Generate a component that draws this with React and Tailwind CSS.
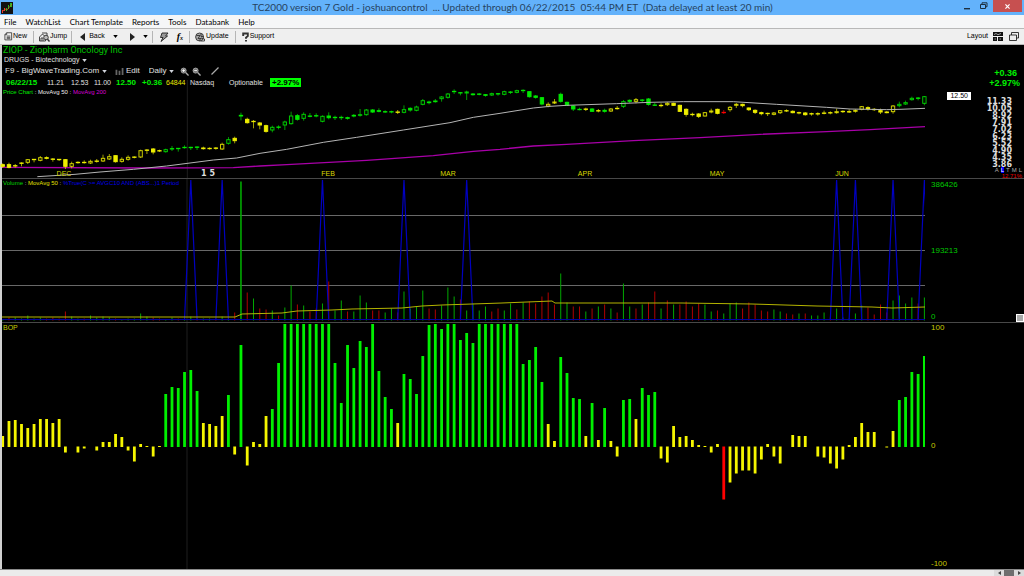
import { Fragment } from 'react';

const W = 923;
const xAt = (i) => 0.7 + i * 6.27;

// [high, top, bottom, low, kind] in thirds of a pixel
// kind: y/g/r = colour, uppercase = hollow body
const candles = [
    [250, 253, 260, 264, 'y'], [248, 253, 263, 265, 'y'], [252, 256, 259, 263, 'y'], [247, 248, 251, 259, 'y'],
    [237, 238, 248, 252, 'Y'], [237, 237, 239, 247, 'y'], [228, 232, 242, 244, 'Y'], [229, 232, 236, 238, 'y'],
    [234, 236, 239, 245, 'y'], [237, 237, 239, 243, 'y'], [237, 238, 260, 267, 'y'], [245, 250, 260, 265, 'Y'],
    [244, 246, 249, 251, 'y'], [241, 246, 249, 251, 'y'], [239, 243, 250, 252, 'Y'], [237, 242, 245, 248, 'y'],
    [224, 234, 244, 246, 'Y'], [222, 229, 238, 240, 'Y'], [226, 226, 246, 248, 'y'], [232, 237, 245, 248, 'Y'],
    [226, 231, 239, 242, 'Y'], [229, 230, 233, 235, 'y'], [209, 211, 232, 234, 'Y'], [207, 209, 212, 222, 'y'],
    [204, 206, 217, 223, 'y'], [209, 211, 214, 216, 'y'], [206, 208, 216, 218, 'G'], [198, 205, 208, 213, 'g'],
    [204, 204, 207, 215, 'g'], [196, 201, 204, 206, 'g'], [200, 201, 204, 210, 'g'], [199, 200, 203, 210, 'g'],
    [200, 203, 207, 209, 'y'], [202, 204, 207, 209, 'y'], [201, 203, 206, 209, 'y'], [188, 192, 208, 210, 'Y'],
    [171, 178, 191, 194, 'G'], [170, 174, 183, 190, 'y'], [98, 105, 109, 121, 'g'], [113, 117, 129, 131, 'y'],
    [120, 123, 126, 145, 'y'], [126, 128, 136, 148, 'y'], [134, 136, 155, 158, 'y'], [137, 141, 151, 157, 'G'],
    [136, 140, 143, 148, 'g'], [122, 125, 136, 150, 'G'], [95, 107, 132, 134, 'G'], [102, 106, 119, 122, 'g'],
    [97, 102, 116, 122, 'G'], [99, 107, 110, 112, 'g'], [100, 106, 109, 112, 'g'], [106, 108, 125, 127, 'G'],
    [97, 107, 114, 118, 'g'], [107, 111, 114, 120, 'g'], [107, 111, 114, 120, 'g'], [110, 112, 116, 119, 'g'],
    [102, 105, 109, 112, 'g'], [87, 103, 107, 110, 'G'], [87, 89, 105, 107, 'G'], [87, 89, 97, 99, 'g'],
    [85, 91, 95, 97, 'g'], [91, 94, 97, 99, 'g'], [92, 94, 97, 100, 'g'], [90, 95, 98, 102, 'y'],
    [76, 88, 98, 100, 'G'], [82, 84, 91, 95, 'g'], [77, 80, 92, 94, 'G'], [57, 61, 74, 76, 'G'],
    [62, 65, 69, 73, 'g'], [57, 62, 66, 68, 'g'], [48, 50, 57, 65, 'G'], [39, 41, 53, 56, 'G'],
    [28, 33, 36, 42, 'g'], [36, 37, 40, 46, 'g'], [32, 35, 40, 60, 'G'], [39, 41, 45, 47, 'g'],
    [39, 41, 44, 46, 'g'], [42, 43, 47, 50, 'g'], [38, 40, 46, 48, 'G'], [39, 40, 43, 47, 'g'],
    [32, 34, 44, 46, 'G'], [33, 35, 38, 42, 'g'], [29, 31, 38, 40, 'G'], [28, 30, 33, 39, 'g'],
    [34, 34, 51, 53, 'g'], [45, 47, 53, 56, 'g'], [51, 52, 73, 76, 'g'], [67, 72, 79, 82, 'Y'],
    [57, 65, 70, 72, 'Y'], [38, 42, 65, 68, 'g'], [65, 66, 77, 78, 'g'], [75, 77, 88, 93, 'g'],
    [83, 87, 90, 91, 'g'], [83, 86, 89, 93, 'y'], [84, 86, 95, 96, 'g'], [87, 91, 94, 97, 'y'],
    [86, 90, 95, 98, 'g'], [84, 86, 94, 96, 'Y'], [78, 84, 87, 89, 'y'], [60, 64, 80, 84, 'G'],
    [58, 60, 65, 69, 'g'], [54, 58, 65, 70, 'Y'], [57, 59, 62, 66, 'g'], [54, 56, 74, 77, 'g'],
    [69, 74, 77, 78, 'g'], [70, 75, 78, 82, 'y'], [66, 69, 75, 78, 'Y'], [68, 69, 77, 78, 'y'],
    [74, 75, 95, 96, 'y'], [85, 87, 104, 110, 'y'], [98, 102, 105, 109, 'y'], [99, 101, 110, 114, 'y'],
    [96, 97, 109, 110, 'Y'], [86, 92, 97, 100, 'Y'], [86, 87, 101, 103, 'y'], [90, 96, 99, 102, 'r'],
    [78, 81, 90, 95, 'Y'], [69, 72, 77, 84, 'Y'], [71, 72, 78, 82, 'y'], [82, 83, 90, 93, 'y'],
    [88, 90, 98, 102, 'y'], [95, 97, 102, 106, 'y'], [98, 99, 102, 108, 'y'], [96, 98, 104, 106, 'Y'],
    [90, 91, 99, 102, 'Y'], [88, 91, 94, 96, 'y'], [91, 93, 99, 100, 'y'], [95, 97, 100, 103, 'y'],
    [96, 98, 105, 107, 'y'], [98, 100, 103, 107, 'y'], [97, 100, 103, 107, 'y'], [92, 98, 101, 103, 'y'],
    [94, 97, 100, 103, 'y'], [86, 94, 99, 101, 'Y'], [91, 93, 96, 99, 'y'], [88, 94, 97, 99, 'y'],
    [88, 90, 95, 98, 'Y'], [78, 79, 89, 91, 'Y'], [79, 82, 87, 92, 'y'], [84, 87, 90, 93, 'y'],
    [86, 91, 97, 102, 'y'], [93, 95, 99, 100, 'y'], [75, 77, 96, 101, 'Y'], [65, 72, 78, 82, 'G'],
    [62, 67, 73, 75, 'G'], [50, 54, 60, 62, 'G'], [51, 53, 56, 61, 'g'], [48, 49, 71, 76, 'G'],
];

const ma50 = '106,290 219,283 294,276 394,268 494,258 564,249 634,240 704,234 774,220 854,208 964,187 1064,172 1204,150 1344,128 1414,112 1494,100 1594,84 1644,79 1694,76 1844,71 1944,67 2044,65 2194,65 2274,70 2324,73 2474,82 2544,87 2654,89 2694,88 2769,85';
const ma200 = '0,262 444,264 694,263 774,258 854,254 1094,241 1294,227 1414,214 1494,208 1594,198 1694,193 1894,182 2094,173 2274,163 2474,155 2604,149 2769,140';

// negative = down day
const volume = [
    1, -3, 3, 2, 5, 2, 3, -2, -3, -2, -9, 4, 2, -2, 5, 3, 4, 3, -2, 1, 2, 2, 7, 4, -3, -2, 1, 3, -2, 2,
    4, -2, 2, 2, -2, 4, 2, -8, 139, -28, 22, -12, -11, 10, -5, 13, 35, -16, 15, -9, -12, 17, -39, 10, 20, -9, 9, 25, 18, -10,
    -10, 8, 12, -8, 29, 12, 14, 30, -12, -11, 15, 33, 24, -21, 10, 17, 10, 14, -9, -12, 10, 17, -11, 18, -19, -17, -24, -28, -16, 47,
    18, -14, -14, 9, -12, 14, -16, 12, -8, 37, 14, -12, 16, -18, -29, 12, -20, 16, -16, -19, -14, -17, 16, 9, -10, 7, 17, 18, -12, -18,
    -16, -10, -9, 11, 9, -7, -6, 7, -7, 5, 5, 8, -3, 12, 3, 2, 7, 15, -13, -6, -16, -8, 20, 25, 17, 23, -17, 23,
];
const volumeAvg = '0,138 233,138 240,135 280,134 295,132 330,131 350,130 400,129 420,127 440,126 470,125 500,124 550,122 553,124 620,124 680,124 750,125 815,127 870,128 890,129 923,128';
const signals = [30, 35, 51, 64, 74, 133, 136, 142, 147];

const bop = [
    11, 26, 27, 23, 19, 23, 28, 28, 24, 28, -6, 0, -6, -2, 0, -4, 5, 5, 13, 10, -4, -15, 3, 1, -10, 1, 53, 60, 59, 75,
    77, 56, 24, 23, 21, 31, 52, -8, 102, -19, 5, 3, 31, 38, 84, 123, 123, 123, 123, 123, 123, 123, 123, 84, 44, 102, 79, 106, 100, 123,
    76, 50, 38, 24, 73, 68, 53, 91, 122, 123, 118, 123, 123, 107, 114, 104, 123, 123, 123, 123, 123, 123, 123, 83, 87, 100, 65, 23, 6, 90,
    74, 49, 48, 11, 44, 7, 39, 6, -10, 47, 48, 28, 59, 52, 55, -12, -16, 21, 10, 11, 7, 2, 1, -6, 3, -53, -36, -27, -24, -24,
    -27, -13, 3, -10, -17, 0, 12, 11, 11, 0, -10, -11, -17, -22, -13, 2, 10, 24, 15, 15, 0, -1, 16, 47, 50, 75, 73, 91,
];

const bopColor = (v) => (v > 35 ? '#00f000' : v < -50 ? '#ff0000' : '#f5f500');
const candleColors = { y: '#eeee00', g: '#00e800', r: '#ff0000' };

const months = [
    { label: 'DEC', x: 62 },
    { label: 'FEB', x: 326 },
    { label: 'MAR', x: 446 },
    { label: 'APR', x: 583 },
    { label: 'MAY', x: 715 },
    { label: 'JUN', x: 840 },
];

const menus = ['File', 'WatchList', 'Chart Template', 'Reports', 'Tools', 'Databank', 'Help'];
const scale = ['11.33', '10.05', '8.92', '7.91', '7.02', '6.23', '5.52', '4.90', '4.35', '3.86'];

const Caret = ({ className = 'text-gray-300' }) => (
    <svg viewBox="0 0 6 4" className={`h-[3px] w-[5px] shrink-0 ${className}`}>
        <path d="M0 0h6L3 4z" fill="currentColor" />
    </svg>
);

const Sep = () => <span className="h-3 w-px bg-[#b5b5b5]" />;

const TitleBar = () => (
    <header className="flex h-[15px] shrink-0 items-center bg-[#63b2fb]">
        <div className="flex-1 pl-px">
            <svg viewBox="0 0 12 12" className="size-3">
                <rect width="12" height="12" fill="#111" />
                <path d="M1 8h1v3H1zM3 6h1v3H3z" fill="#e33" />
                <path d="M5 6h1v3H5zM7 3h1v4H7zM9 1h2v4H9z" fill="#2b2" />
                <path d="M2 9l2-2 2 1 5-6" stroke="#d62" fill="none" strokeWidth="0.7" />
            </svg>
        </div>
        <h1 className="font-[Lato,sans-serif] text-[10px] leading-[15px] whitespace-pre text-[#26435f]">
            TC2000 version 7 Gold - joshuancontrol  ... Updated through 06/22/2015  05:44 PM ET  (Data delayed at least 20 min)
        </h1>
        <div className="flex flex-1 items-start justify-end self-stretch">
            <button aria-label="Minimize" className="flex h-3 w-4 items-center justify-center">
                <svg viewBox="0 0 6 8" className="h-2 w-[6px]"><path d="M0 6h6v1.4H0z" fill="#1c2f40" /></svg>
            </button>
            <button aria-label="Restore" className="flex h-3 w-[18px] items-center justify-center">
                <svg viewBox="0 0 8 8" className="size-2" fill="none" stroke="#1c2f40">
                    <path d="M.5 2.5h5v4h-5zM2 2V.8h5v4H6" />
                </svg>
            </button>
            <button aria-label="Close" className="flex h-3 w-[29px] items-center justify-center bg-[#c75050]">
                <svg viewBox="0 0 6 6" className="size-[5px]" stroke="#fff" strokeWidth="1.4"><path d="M.5.5l5 5M5.5.5l-5 5" /></svg>
            </button>
            <span className="w-[2px]" />
        </div>
    </header>
);

const ToolBar = () => (
    <div className="flex h-[17px] shrink-0 items-center border-t border-b border-[#b8b8b8] bg-[#efefef] pr-[5px] pl-1 text-[7px] text-black">
        <button className="flex items-center">
            <svg viewBox="0 0 10 10" className="size-[9px]" fill="none" stroke="#333" strokeWidth="0.9">
                <path d="M3 .8h5.5v8H1V3zM3 .8V3H1M3 4.5h4M3 6h4M3 7.4h4" />
            </svg>
            <span>New</span>
        </button>
        <span className="w-[6px]" />
        <Sep />
        <button className="ml-[5px] flex items-center">
            <svg viewBox="0 0 11 10" className="h-[10px] w-[11px]" fill="none" stroke="#333" strokeWidth="0.9">
                <path d="M.5 9V5l3-3 3 3v4zM3 1h5v4M2 9V6h2v3" />
                <circle cx="7" cy="5.5" r="2.3" fill="#bbb" />
                <path d="M8.5 7.2L10.5 9.5" strokeWidth="1.4" />
            </svg>
            <span>Jump</span>
        </button>
        <span className="w-1" />
        <Sep />
        <button className="ml-2 flex items-center gap-1">
            <svg viewBox="0 0 5 8" className="h-2 w-[5px]"><path d="M5 0v8L0 4z" fill="#222" /></svg>
            <span>Back</span>
        </button>
        <button aria-label="Back history" className="ml-2 flex"><Caret className="text-black" /></button>
        <button aria-label="Forward" className="ml-3 flex">
            <svg viewBox="0 0 5 8" className="h-2 w-[5px]"><path d="M0 0v8l5-4z" fill="#222" /></svg>
        </button>
        <button aria-label="Forward history" className="mr-1 ml-2 flex"><Caret className="text-black" /></button>
        <Sep />
        <button aria-label="Alerts" className="ml-[6px] flex">
            <svg viewBox="0 0 10 10" className="size-[10px]" fill="#999" stroke="#222" strokeWidth="0.9">
                <path d="M3 1h6L6.6 4h2L2 9.5 4 5.5H1.5z" />
            </svg>
        </button>
        <button aria-label="Formula" className="mr-[6px] ml-2 font-['Liberation_Serif',serif] text-[10px] font-bold italic">
            f<span className="text-[6px]">x</span>
        </button>
        <Sep />
        <button className="ml-[5px] flex items-center gap-px">
            <svg viewBox="0 0 10 10" className="size-[10px]" fill="none" stroke="#333" strokeWidth="0.9">
                <circle cx="4.6" cy="5" r="4" fill="#aaa" />
                <path d="M1.5 3.5H5l-2 3h3M6 1.5v3h2.5M4 9l2-3 3.5 1v2h-4" />
            </svg>
            <span>Update</span>
        </button>
        <span className="w-[6px]" />
        <Sep />
        <button className="ml-[6px] flex items-center">
            <svg viewBox="0 0 8 10" className="h-[10px] w-2" fill="none">
                <path d="M1.2 4V1.5h4.6V4L4 5.6v1.2" stroke="#333" strokeWidth="1.9" />
                <path d="M3 8h2v1.6H3z" fill="#333" />
            </svg>
            <span>Support</span>
        </button>
        <button className="ml-auto flex items-center gap-[5px]">
            <span>Layout</span>
            <svg viewBox="0 0 10 9" className="h-[9px] w-[10px]">
                <path d="M0 0h10v4H0zM0 5h4v4H0zM5 5h5v4H5z" fill="#111" />
                <path d="M1 2.5l2-1 2 1.2 3-1.2M1.5 7h1.4M6.5 7H8" stroke="#ddd" strokeWidth="0.7" fill="none" />
            </svg>
        </button>
        <button aria-label="Windows" className="ml-[6px] flex">
            <svg viewBox="0 0 10 9" className="h-[9px] w-[10px]" fill="#eee" stroke="#222" strokeWidth="0.9">
                <path d="M2.5.5h7V6h-7z" />
                <path d="M.5 3h7v5.5h-7z" />
            </svg>
        </button>
    </div>
);

const Picker = ({ label, value }) => (
    <label className="flex items-center gap-[2px]">
        <select aria-label={label} className="appearance-none bg-black">
            <option>{value}</option>
        </select>
        <Caret />
    </label>
);

const Magnifier = ({ children }) => (
    <svg viewBox="0 0 10 10" className="size-[9px]" stroke="#aaa" fill="none">
        <circle cx="4" cy="4" r="2.8" fill="#777" />
        <path d="M6.2 6.2L9.5 9.5" strokeWidth="1.5" />
        {children}
    </svg>
);

const ChartHeader = () => (
    <div className="pl-px whitespace-nowrap text-[#e0e0e0]">
        <h2 className="font-[Roboto,sans-serif] text-[9px] leading-[10px] text-[#00c000]">ZIOP - Ziopharm Oncology Inc</h2>
        <div className="flex h-[10px] items-center pl-px text-[7px] leading-[10px]">
            <Picker label="Industry" value="DRUGS - Biotechnology" />
        </div>
        <div className="flex h-3 items-center pl-[2px] text-[8px] leading-3">
            <Picker label="Chart template" value="F9 - BigWaveTrading.Com" />
            <button className="ml-2 flex items-center gap-[2px]">
                <svg viewBox="0 0 9 8" className="h-[7px] w-[9px]"><path d="M0 2h2v6H0zM3.5 3h2v5h-2zM7 0h2v8H7z" fill="#666" /></svg>
                Edit
            </button>
            <span className="w-[9px]" />
            <Picker label="Interval" value="Daily" />
            <button aria-label="Zoom in" className="ml-[6px]"><Magnifier><path d="M2.5 4h3M4 2.5v3" stroke="#fff" /></Magnifier></button>
            <button aria-label="Zoom out" className="ml-[3px]"><Magnifier><path d="M2.5 4h3" stroke="#fff" /></Magnifier></button>
            <button aria-label="Draw" className="ml-[10px]">
                <svg viewBox="0 0 8 8" className="size-2"><path d="M.5 7.5l7-7" stroke="#aaa" strokeWidth="1.3" /></svg>
            </button>
        </div>
        <div className="flex h-[11px] items-center pl-[3px] text-[7px] leading-[11px]">
            <span className="w-[41px] text-[8px] font-bold text-[#00f000]">06/22/15</span>
            <span className="w-6">11.21</span>
            <span className="w-[23px]">12.53</span>
            <span className="w-[22px]">11.00</span>
            <span className="w-[26px] text-[8px] font-bold text-[#00f000]">12.50</span>
            <span className="w-6 text-[8px] font-bold text-[#00f000]">+0.36</span>
            <span className="w-6 text-[#e8e800]">64844</span>
            <span className="w-[39px]">Nasdaq</span>
            <span className="w-[41px]">Optionable</span>
            <span className="bg-[#00ff00] px-[2px] text-[8px] leading-[9px] font-bold text-black">+2.97%</span>
        </div>
    </div>
);

const Crosshair = ({ x, h, w }) => (
    <line x1={x} x2={x} y1="0" y2={h} stroke="#1e1e1e" strokeWidth={w} />
);

const PricePlot = () => (
    <svg viewBox="0 24 2769 270" preserveAspectRatio="none" className="block h-[90px] w-full overflow-visible">
        <Crosshair x={556} h={294} w={3} />
        <polyline points={ma200} fill="none" stroke="#a800a8" strokeWidth="4" />
        {candles.map(([hi, top, bottom, lo, kind], i) => {
            const x = xAt(i) * 3;
            const color = candleColors[kind.toLowerCase()];
            const hollow = kind !== kind.toLowerCase();
            return (
                <g key={i} stroke={color}>
                    <line x1={x} x2={x} y1={hi} y2={lo} strokeWidth="2.5" opacity="0.8" />
                    <rect x={x - 5} y={top + 1} width="10" height={Math.max(bottom - top - 2, 1)} strokeWidth="3" fill={hollow ? '#000' : color} opacity={hollow ? 0.85 : 1} />
                </g>
            );
        })}
        <polyline points={ma50} fill="none" stroke="#b4b4b4" strokeWidth="3" />
    </svg>
);

const VolumePlot = () => (
    <svg viewBox="0 0 923 143" preserveAspectRatio="none" className="block h-[143px] min-w-0 flex-1">
        <Crosshair x={185} h={143} w={1} />
        {[36.5, 71.5, 106.5].map((y) => <line key={y} x1="0" x2={W} y1={y} y2={y} stroke="#686868" />)}
        {volume.map((v, i) => (
            <rect key={i} x={xAt(i) - (i === 38 ? 0.8 : 0.5)} y={141.5 - Math.abs(v)} width={i === 38 ? 1.6 : 1} height={Math.abs(v)} fill={v > 0 ? '#00a800' : '#b00000'} />
        ))}
        <line x1="0" x2={W} y1="140.5" y2="140.5" stroke="#0000a0" />
        {signals.map((i) => (
            <polyline key={i} points={`${xAt(i - 1)},140.5 ${xAt(i)},1 ${xAt(i + 1)},140.5`} fill="none" stroke="#0000c0" strokeWidth="1.2" />
        ))}
        <polyline points={volumeAvg} fill="none" stroke="#b4b400" />
    </svg>
);

const BopPlot = () => (
    <svg viewBox="0 0 923 246" preserveAspectRatio="none" className="block min-w-0 flex-1">
        <Crosshair x={185} h={246} w={1} />
        {bop.map((v, i) => (
            <rect key={i} x={xAt(i) - 1.4} y={v > 0 ? 124 - v : 123.5} width="2.8" height={Math.abs(v)} fill={bopColor(v)} />
        ))}
    </svg>
);

const App = () => {
    return (
        <div className="flex min-h-screen flex-col bg-[#efefef] font-['Liberation_Sans',Arial,sans-serif]">
            <TitleBar />
            <nav className="flex h-[13px] shrink-0 items-center gap-[9px] bg-[#f5f6f7] pl-1 font-[Lato,sans-serif] text-[8px] leading-3 text-black">
                {menus.map((m) => <button key={m}>{m}</button>)}
            </nav>
            <ToolBar />

            <main className="flex flex-1 flex-col border-l-2 border-[#d0d0d0] bg-black">
                <section className="flex border-b border-[#484848]">
                    <div className="min-w-0 flex-1">
                        <ChartHeader />
                        <div className="relative">
                            <PricePlot />
                            <p className="absolute top-0 left-px text-[6px] leading-[9px] whitespace-pre text-[#eee]">
                                <span className="text-[#00e800]">Price Chart</span> : MovAvg 50 : <span className="text-[#d800d8]">MovAvg 200</span>
                            </p>
                            {months.map((m) => (
                                <span key={m.label} className="absolute bottom-0 -translate-x-1/2 text-[7px] leading-[9px] text-[#d8d800]" style={{ left: `${(m.x / W) * 100}%` }}>
                                    {m.label}
                                </span>
                            ))}
                            <span className="absolute bottom-0 -translate-x-1/2 font-['DejaVu_Sans',sans-serif] text-[8px] leading-[9px] font-bold whitespace-pre text-[#ddd]" style={{ left: `${(206 / W) * 100}%` }}>
                                1 5
                            </span>
                        </div>
                    </div>
                    <div className="flex w-[99px] flex-col items-end pt-[23px] pr-1">
                        <p className="text-right text-[9px] leading-[10px] font-bold text-[#00f000]"><span className="pr-[3px]">+0.36</span><br />+2.97%</p>
                        <span className="mt-1 mr-[49px] bg-white px-[3px] text-[7px] leading-2 text-black">12.50</span>
                        <ul className="-mt-[2px] mr-2 text-right font-['DejaVu_Sans',sans-serif] text-[8px] leading-[7px] font-bold text-[#ddd]">
                            {scale.map((s) => <li key={s}>{s}</li>)}
                        </ul>
                    </div>
                </section>

                <section className="relative flex border-b border-[#484848]">
                    <VolumePlot />
                    <p className="absolute top-0 left-px text-[6px] leading-[9px] whitespace-pre text-[#ccc]">
                        <span className="text-[#00d800]">Volume</span> : <span className="text-[#e0e000]">MovAvg 50</span> : <span className="text-[#0000e8]">%True(C &gt;= AVGC10 AND (ABS...)1 Period</span>
                    </p>
                    <div className="flex w-[99px] flex-col justify-between pt-px pl-[6px] text-[8px] leading-[10px] text-[#00c800]">
                        <span>386426</span>
                        <span>193213</span>
                        <span className="flex items-end justify-between">
                            0
                            <button aria-label="Resize pane" className="size-2 border border-white bg-[#aaa]" />
                        </span>
                    </div>
                    {/* scale mode switches hang over the pane border */}
                    <div className="absolute -top-3 right-[2px] text-right text-[6px] leading-[6px] text-[#aaa]">
                        <p className="flex justify-end gap-[2px]"><span>A</span><span className="bg-[#0000ff] text-white">L</span><span>T</span><span>M</span><span>L</span></p>
                        <p className="text-[#e80000]">12.71%</p>
                    </div>
                </section>

                <section className="relative flex flex-1">
                    <BopPlot />
                    <p className="absolute top-0 left-px text-[7px] leading-[9px] text-[#c8c800]">BOP</p>
                    <div className="flex w-[99px] flex-col justify-between pl-[6px] text-[8px] leading-[10px] text-[#c8c800]">
                        <span>100</span>
                        <span>0</span>
                        <span>-100</span>
                    </div>
                </section>
            </main>

            <footer className="flex h-[7px] shrink-0 items-center justify-end border-t border-[#8a8a8a] bg-[#ebebeb]">
                {['left', 'thumb', 'right'].map((part) => (
                    <Fragment key={part}>
                        {part === 'thumb' ? (
                            <span className="h-[6px] w-[10px] bg-[#6e6e6e]" />
                        ) : (
                            <button aria-label={`Scroll ${part}`} className="flex h-[6px] w-[10px] items-center justify-center bg-[#dcdcdc]">
                                <svg viewBox="0 0 3 4" className={part === 'left' ? 'h-1 w-[3px]' : 'h-1 w-[3px] rotate-180'}><path d="M3 0v4L0 2z" fill="#444" /></svg>
                            </button>
                        )}
                    </Fragment>
                ))}
            </footer>
        </div>
    );
};

export default App;
